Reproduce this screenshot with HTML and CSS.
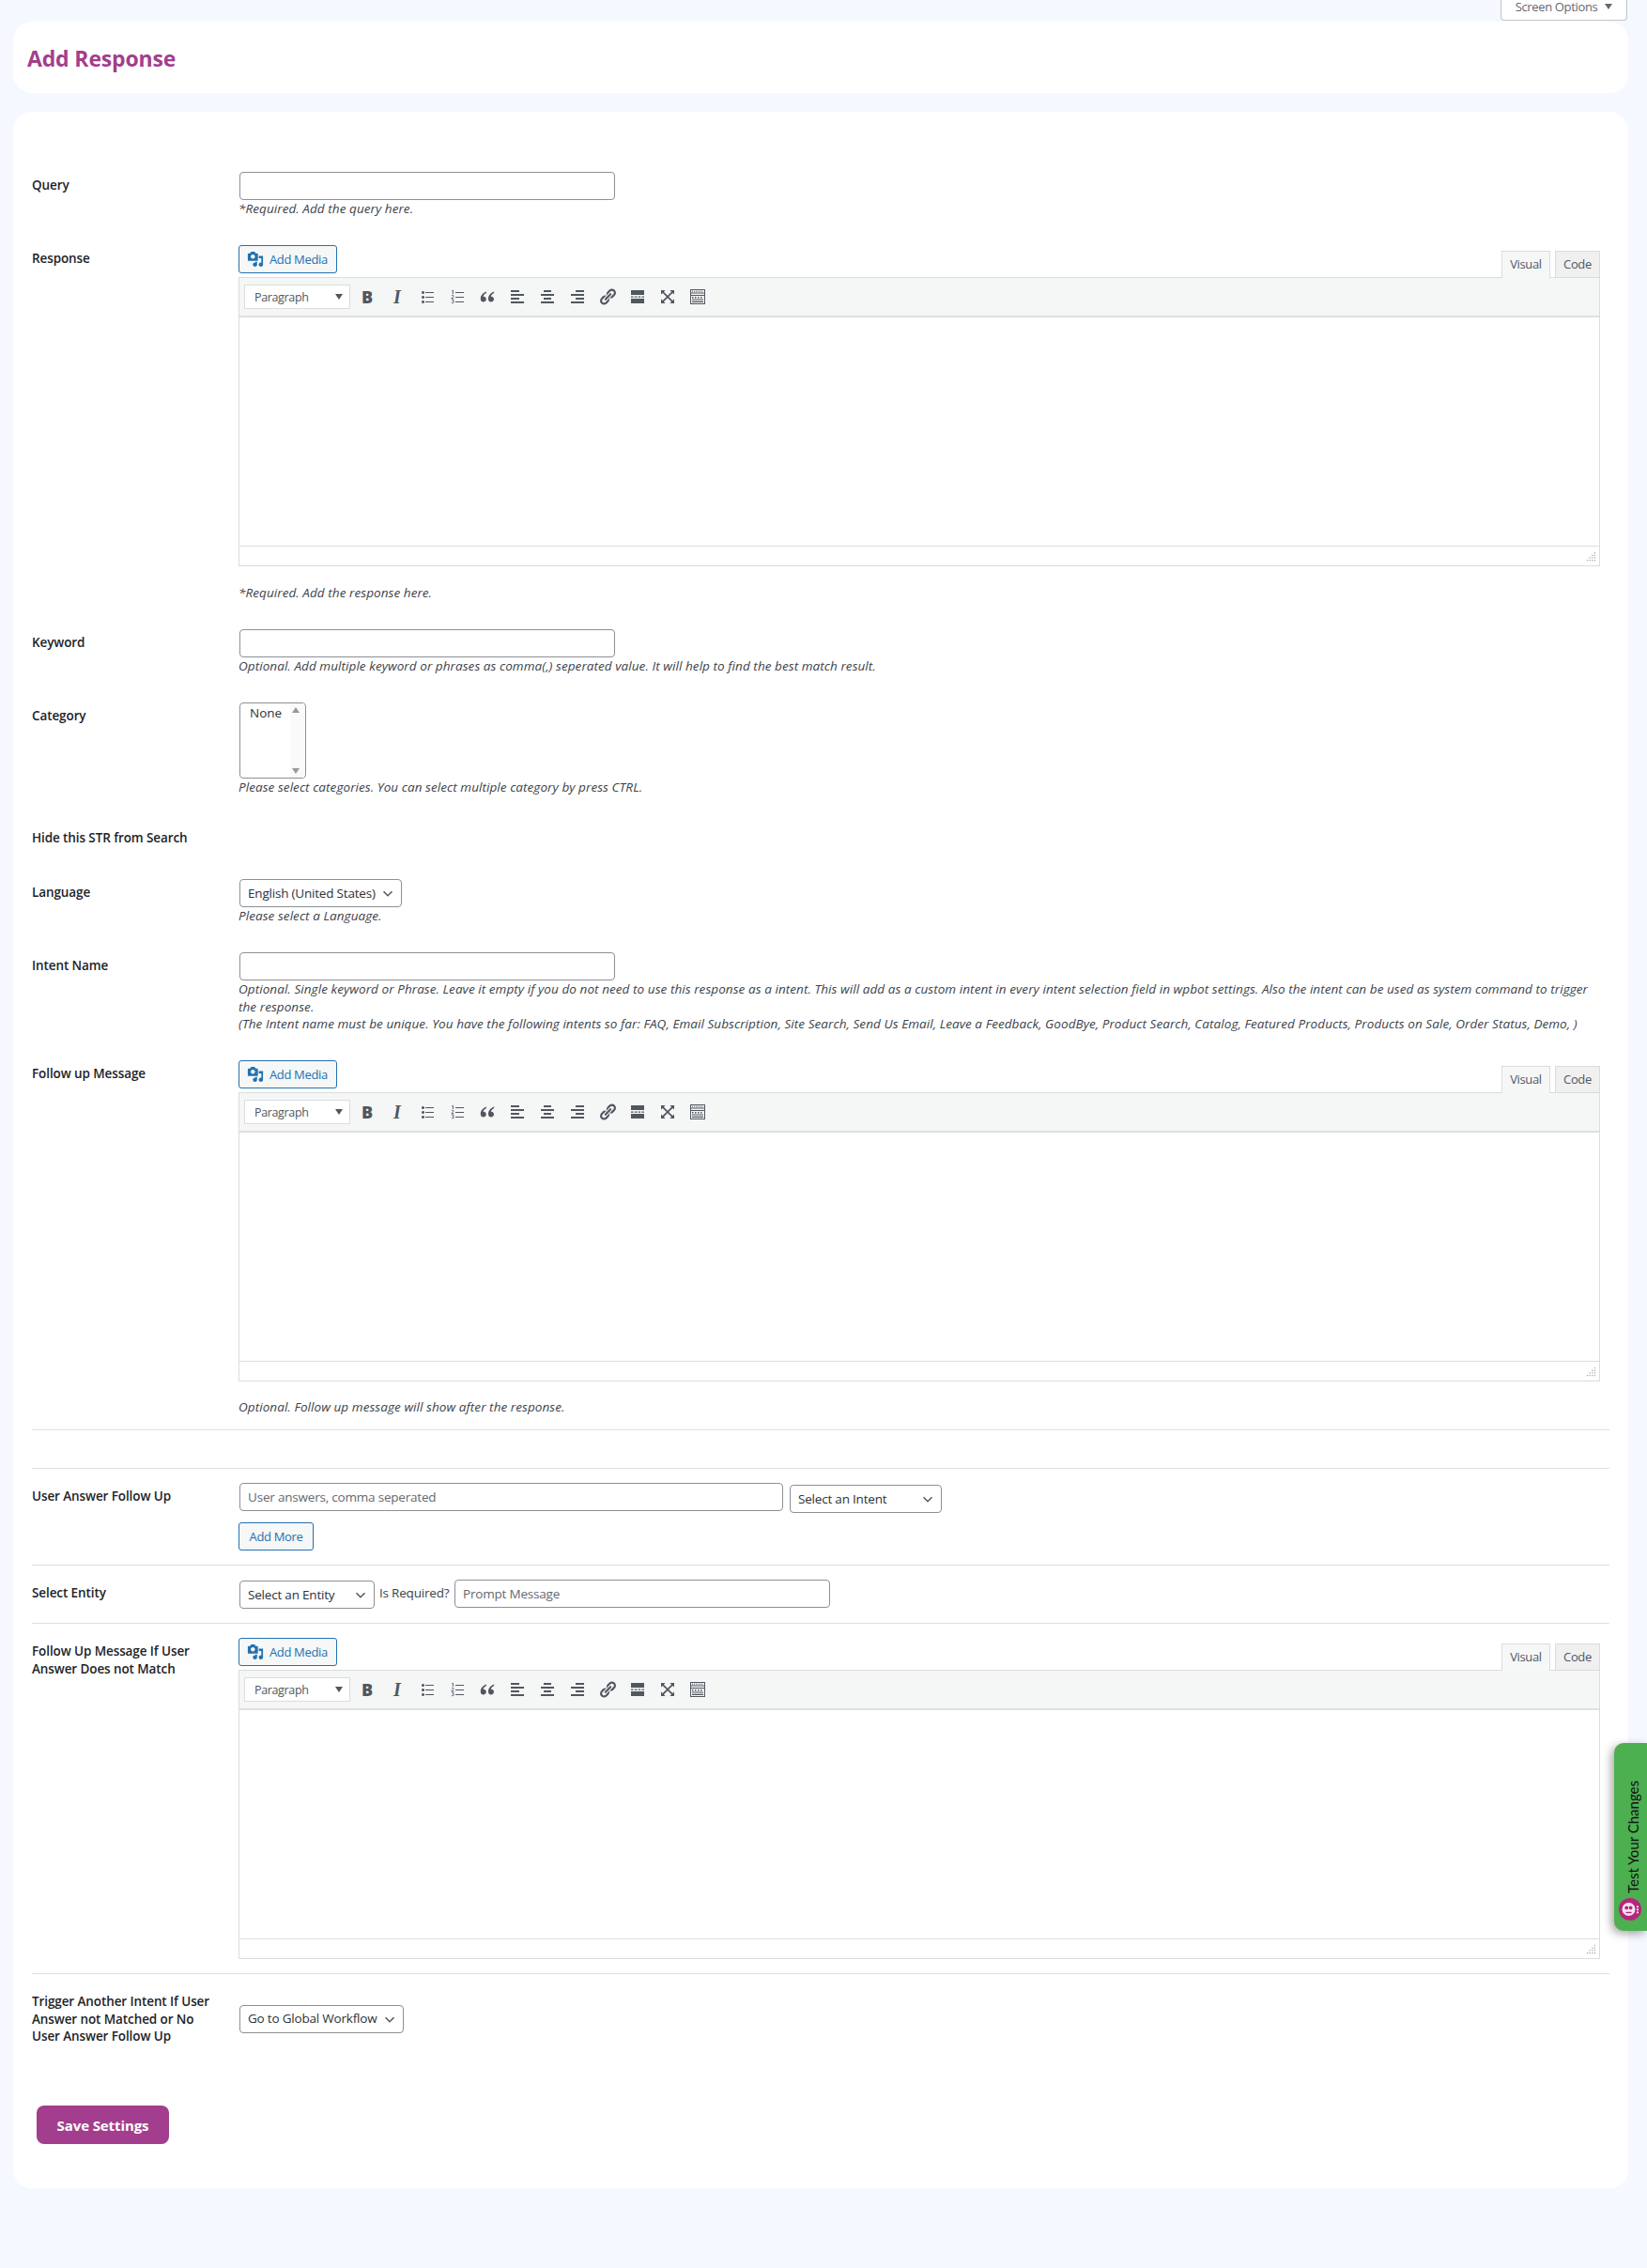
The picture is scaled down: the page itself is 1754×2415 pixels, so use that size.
FILE: index.html
```html
<!DOCTYPE html>
<html lang="en">
<head>
<meta charset="utf-8">
<title>Add Response</title>
<link rel="stylesheet" href="styles.css">
</head>
<body>
<svg class="sprites" aria-hidden="true">
  <symbol id="i-media" viewBox="0 0 20 20"><path d="M13 11V4c0-.55-.45-1-1-1h-1.67L9 1H5L3.67 3H2c-.55 0-1 .45-1 1v7c0 .55.45 1 1 1h10c.55 0 1-.45 1-1zM7 4.5c1.38 0 2.5 1.12 2.5 2.5S8.38 9.5 7 9.5 4.5 8.38 4.5 7 5.62 4.5 7 4.5zM14 6h5v10.5c0 1.38-1.12 2.5-2.5 2.5S14 17.88 14 16.5s1.12-2.5 2.5-2.5c.17 0 .34.02.5.05V9h-3V6zm-4 8.05V13h2v3.5c0 1.38-1.12 2.5-2.5 2.5S7 17.88 7 16.5 8.12 14 9.5 14c.17 0 .34.02.5.05z"/></symbol>
  <symbol id="i-ul" viewBox="0 0 20 20"><path d="M5.5 7C4.67 7 4 6.33 4 5.5 4 4.68 4.67 4 5.5 4 6.32 4 7 4.68 7 5.5 7 6.33 6.32 7 5.5 7zM8 5h9v1H8V5zm-2.5 7c-.83 0-1.5-.67-1.5-1.5C4 9.68 4.67 9 5.5 9c.82 0 1.5.68 1.5 1.5 0 .83-.68 1.5-1.5 1.5zM8 10h9v1H8v-1zm-2.5 7c-.83 0-1.5-.67-1.5-1.5 0-.82.67-1.5 1.5-1.5.82 0 1.5.68 1.5 1.5 0 .83-.68 1.5-1.5 1.5zM8 15h9v1H8v-1z"/></symbol>
  <symbol id="i-ol" viewBox="0 0 20 20"><path d="M8 5h9v1H8V5zm0 5h9v1H8v-1zm0 5h9v1H8v-1z"/><path d="M4.3 3.9 5.4 3.2V7M3.8 8.7c.5-.6 2.2-.6 2.2.5 0 .9-1.4 1.5-2.2 2.6H6.3M3.9 13.4c.6-.5 2.2-.5 2.2.5 0 .5-.5.8-1.1.8.7 0 1.3.4 1.3 1 0 1.1-1.7 1.2-2.5.6" fill="none" stroke="currentColor" stroke-width=".9"/></symbol>
  <symbol id="i-quote" viewBox="0 0 20 20"><path d="M9 4.5C5.4 5.8 2.8 8.4 2.8 12.2c0 2.1 1.3 3.3 3 3.3s3-1.2 3-2.9-1.2-2.8-2.7-2.8c-.2 0-.4 0-.6.1.3-1.5 1.6-2.9 3.5-3.9zm8.2 0c-3.6 1.3-6.2 3.9-6.2 7.7 0 2.1 1.3 3.3 3 3.3s3-1.2 3-2.9-1.2-2.8-2.7-2.8c-.2 0-.4 0-.6.1.3-1.5 1.6-2.9 3.5-3.9z"/></symbol>
  <symbol id="i-left" viewBox="0 0 20 20"><path d="M12 5V3H3v2h9zm5 4V7H3v2h14zm-5 4v-2H3v2h9zm5 4v-2H3v2h14z"/></symbol>
  <symbol id="i-center" viewBox="0 0 20 20"><path d="M14 5V3H6v2h8zm3 4V7H3v2h14zm-3 4v-2H6v2h8zm3 4v-2H3v2h14z"/></symbol>
  <symbol id="i-right" viewBox="0 0 20 20"><path d="M17 5V3H8v2h9zm0 4V7H3v2h14zm0 4v-2H8v2h9zm0 4v-2H3v2h14z"/></symbol>
  <symbol id="i-link" viewBox="0 0 20 20"><path d="M17.74 2.76c1.68 1.69 1.68 4.41 0 6.1l-1.53 1.52c-1.12 1.12-2.7 1.47-4.14 1.09l2.62-2.61.76-.77.76-.76c.84-.84.84-2.2 0-3.04-.84-.85-2.2-.85-3.04 0l-.77.76-3.38 3.38c-.37-1.44-.02-3.02 1.1-4.14l1.52-1.53c1.69-1.68 4.42-1.68 6.1 0zM8.59 13.43l5.34-5.34c.42-.42.42-1.1 0-1.52-.44-.43-1.13-.39-1.53 0l-5.33 5.34c-.42.42-.42 1.1 0 1.52.44.43 1.13.39 1.52 0zm-.76 2.29l4.14-4.15c.38 1.44.03 3.02-1.09 4.14l-1.52 1.53c-1.69 1.68-4.41 1.68-6.1 0-1.68-1.68-1.68-4.42 0-6.1l1.53-1.52c1.12-1.12 2.7-1.47 4.14-1.1l-4.14 4.15c-.85.84-.85 2.2 0 3.05.84.84 2.2.84 3.04 0z"/></symbol>
  <symbol id="i-more" viewBox="0 0 20 20"><path d="M3 3h14v5H3zM3 12h14v5H3zM3 9.5h2.6v1.2H3zM6.8 9.5h2.6v1.2H6.8zM10.6 9.5h2.6v1.2h-2.6zM14.4 9.5H17v1.2h-2.6z"/></symbol>
  <symbol id="i-full" viewBox="0 0 20 20"><path d="M3 3h4.6L5.9 4.7 10 8.8l4.1-4.1L12.4 3H17v4.6l-1.7-1.7L11.2 10l4.1 4.1 1.7-1.7V17h-4.6l1.7-1.7L10 11.2l-4.1 4.1L7.6 17H3v-4.6l1.7 1.7L8.8 10 4.7 5.9 3 7.6z"/></symbol>
  <symbol id="i-sink" viewBox="0 0 20 20"><path d="M2 2h16v16H2zm1 1v2.6h14V3zm0 3.6V17h14V6.6z" fill-rule="evenodd"/><path d="M4 3.8h1v1H4zM6 3.8h1v1H6zM8 3.8h1v1H8zM10 3.8h1v1h-1zM12 3.8h1v1h-1zM14 3.8h1v1h-1zM3 8h14v1H3zM4 10h1.5v1.5H4zM7 10h1.5v1.5H7zM10 10h1.5v1.5H10zM13 10h1.5v1.5H13zM4 12.6h12v1H4zM4 14.8h12v1.2H4z"/></symbol>
  <symbol id="i-grip" viewBox="0 0 10 10"><path d="M8 0h1.2v1.2H8zM5.6 2.4h1.2v1.2H5.6zM8 2.4h1.2v1.2H8zM3.2 4.8h1.2V6H3.2zM5.6 4.8h1.2V6H5.6zM8 4.8h1.2V6H8zM.8 7.2H2v1.2H.8zM3.2 7.2h1.2v1.2H3.2zM5.6 7.2h1.2v1.2H5.6zM8 7.2h1.2v1.2H8z"/></symbol>
</svg>

<div class="topbar"><button class="screen-options" type="button">Screen Options<span class="caret"></span></button></div>

<main class="page">
  <header class="card title-card"><h1>Add Response</h1></header>

  <section class="card form-card">
    <div class="row first">
      <div class="label">Query</div>
      <div class="field">
        <input class="text w400" type="text">
        <p class="hint">*Required. Add the query here.</p>
      </div>
    </div>

    <div class="row">
      <div class="label">Response</div>
      <div class="field">
        <div class="editor-head">
          <button class="media" type="button"><svg class="media-icon"><use href="#i-media"/></svg>Add Media</button>
          <div class="tabs"><span class="tab active">Visual</span><span class="tab">Code</span></div>
        </div>
        <div class="editor">
          <div class="toolbar">
            <span class="format">Paragraph<span class="caret dark"></span></span>
            <span class="tool glyph-b">B</span><span class="tool glyph-i">I</span>
            <span class="tool"><svg><use href="#i-ul"/></svg></span>
            <span class="tool"><svg><use href="#i-ol"/></svg></span>
            <span class="tool"><svg><use href="#i-quote"/></svg></span>
            <span class="tool"><svg><use href="#i-left"/></svg></span>
            <span class="tool"><svg><use href="#i-center"/></svg></span>
            <span class="tool"><svg><use href="#i-right"/></svg></span>
            <span class="tool"><svg><use href="#i-link"/></svg></span>
            <span class="tool"><svg><use href="#i-more"/></svg></span>
            <span class="tool"><svg><use href="#i-full"/></svg></span>
            <span class="tool"><svg><use href="#i-sink"/></svg></span>
          </div>
          <div class="edit-area"></div>
          <div class="status"><svg class="grip"><use href="#i-grip"/></svg></div>
        </div>
        <p class="hint after-editor">*Required. Add the response here.</p>
      </div>
    </div>

    <div class="row">
      <div class="label">Keyword</div>
      <div class="field">
        <input class="text w400" type="text">
        <p class="hint">Optional. Add multiple keyword or phrases as comma(,) seperated value. It will help to find the best match result.</p>
      </div>
    </div>

    <div class="row">
      <div class="label">Category</div>
      <div class="field">
        <div class="listbox"><span class="list-item">None</span><span class="list-scroll"><i class="arrow up"></i><i class="arrow down"></i></span></div>
        <p class="hint">Please select categories. You can select multiple category by press CTRL.</p>
      </div>
    </div>

    <div class="row hide-row">
      <div class="label">Hide this STR from Search</div>
      <div class="field"></div>
    </div>

    <div class="row">
      <div class="label">Language</div>
      <div class="field">
        <select class="pick w-lang"><option>English (United States)</option></select>
        <p class="hint">Please select a Language.</p>
      </div>
    </div>

    <div class="row">
      <div class="label">Intent Name</div>
      <div class="field">
        <input class="text w400" type="text">
        <p class="hint intent-hint">Optional. Single keyword or Phrase. Leave it empty if you do not need to use this response as a intent. This will add as a custom intent in every intent selection field in wpbot settings. Also the intent can be used as system command to trigger the response.<br>(The Intent name must be unique. You have the following intents so far: FAQ, Email Subscription, Site Search, Send Us Email, Leave a Feedback, GoodBye, Product Search, Catalog, Featured Products, Products on Sale, Order Status, Demo, )</p>
      </div>
    </div>

    <div class="row">
      <div class="label">Follow up Message</div>
      <div class="field">
        <div class="editor-head">
          <button class="media" type="button"><svg class="media-icon"><use href="#i-media"/></svg>Add Media</button>
          <div class="tabs"><span class="tab active">Visual</span><span class="tab">Code</span></div>
        </div>
        <div class="editor">
          <div class="toolbar">
            <span class="format">Paragraph<span class="caret dark"></span></span>
            <span class="tool glyph-b">B</span><span class="tool glyph-i">I</span>
            <span class="tool"><svg><use href="#i-ul"/></svg></span>
            <span class="tool"><svg><use href="#i-ol"/></svg></span>
            <span class="tool"><svg><use href="#i-quote"/></svg></span>
            <span class="tool"><svg><use href="#i-left"/></svg></span>
            <span class="tool"><svg><use href="#i-center"/></svg></span>
            <span class="tool"><svg><use href="#i-right"/></svg></span>
            <span class="tool"><svg><use href="#i-link"/></svg></span>
            <span class="tool"><svg><use href="#i-more"/></svg></span>
            <span class="tool"><svg><use href="#i-full"/></svg></span>
            <span class="tool"><svg><use href="#i-sink"/></svg></span>
          </div>
          <div class="edit-area"></div>
          <div class="status"><svg class="grip"><use href="#i-grip"/></svg></div>
        </div>
        <p class="hint after-editor short">Optional. Follow up message will show after the response.</p>
      </div>
    </div>

    <div class="rule-gap"></div>

    <div class="row ruled">
      <div class="label">User Answer Follow Up</div>
      <div class="field">
        <div class="inline">
          <input class="text w-answers" type="text" placeholder="User answers, comma seperated">
          <select class="pick w-intent nudge"><option>Select an Intent</option></select>
        </div>
        <button class="media add-more" type="button">Add More</button>
      </div>
    </div>

    <div class="row ruled">
      <div class="label">Select Entity</div>
      <div class="field">
        <div class="inline entity">
          <select class="pick w-entity"><option>Select an Entity</option></select>
          <span class="required">Is Required?</span>
          <input class="text w400" type="text" placeholder="Prompt Message">
        </div>
      </div>
    </div>

    <div class="row ruled">
      <div class="label">Follow Up Message If User Answer Does not Match</div>
      <div class="field">
        <div class="editor-head">
          <button class="media" type="button"><svg class="media-icon"><use href="#i-media"/></svg>Add Media</button>
          <div class="tabs"><span class="tab active">Visual</span><span class="tab">Code</span></div>
        </div>
        <div class="editor">
          <div class="toolbar">
            <span class="format">Paragraph<span class="caret dark"></span></span>
            <span class="tool glyph-b">B</span><span class="tool glyph-i">I</span>
            <span class="tool"><svg><use href="#i-ul"/></svg></span>
            <span class="tool"><svg><use href="#i-ol"/></svg></span>
            <span class="tool"><svg><use href="#i-quote"/></svg></span>
            <span class="tool"><svg><use href="#i-left"/></svg></span>
            <span class="tool"><svg><use href="#i-center"/></svg></span>
            <span class="tool"><svg><use href="#i-right"/></svg></span>
            <span class="tool"><svg><use href="#i-link"/></svg></span>
            <span class="tool"><svg><use href="#i-more"/></svg></span>
            <span class="tool"><svg><use href="#i-full"/></svg></span>
            <span class="tool"><svg><use href="#i-sink"/></svg></span>
          </div>
          <div class="edit-area"></div>
          <div class="status"><svg class="grip"><use href="#i-grip"/></svg></div>
        </div>
      </div>
    </div>

    <div class="row ruled centered">
      <div class="label">Trigger Another Intent If User Answer not Matched or No User Answer Follow Up</div>
      <div class="field">
        <select class="pick w-global"><option>Go to Global Workflow</option></select>
      </div>
    </div>

    <button class="save" type="button">Save Settings</button>
  </section>
</main>

<aside class="test-tab">
  <span class="test-text">Test Your Changes</span>
  <svg class="bot" viewBox="0 0 24 24" aria-hidden="true">
    <circle cx="12" cy="12" r="12" fill="#b5267e"/>
    <circle cx="10.5" cy="12" r="7" fill="#f7e3ef"/>
    <circle cx="8.2" cy="10.5" r="1.9" fill="#b5267e"/>
    <circle cx="12.6" cy="10.5" r="1.9" fill="#b5267e"/>
    <path d="M7.5 14.8h6v1.4h-6z" fill="#b5267e"/>
    <path d="M19 8.5h1.8v1.8H19zM19 11.5h1.8v1.8H19zM19 14.5h1.8v1.8H19z" fill="#fff"/>
  </svg>
</aside>
</body>
</html>
```
FILE: styles.css
```css
* { box-sizing: border-box; }
html, body { margin: 0; padding: 0; background: #f5f8fe; }
body {
  position: relative;
  font-family: "Open Sans", "Noto Sans", sans-serif;
  font-size: 13.5px;
  line-height: 19px;
  color: #3c434a;
  min-height: 2415px;
  overflow: hidden;
}
.sprites { position: absolute; width: 0; height: 0; }

.topbar { height: 23px; display: flex; justify-content: flex-end; padding-right: 21px; }
.screen-options {
  width: 135px; height: 22px; padding: 0;
  display: flex; justify-content: center; align-items: flex-start;
  font: 13px/14px "Open Sans", sans-serif; letter-spacing: -0.35px; color: #646970;
  background: #fff; border: 1px solid #c3c4c7; border-top: 0; border-radius: 0 0 4px 4px;
}
.caret { display: inline-block; width: 0; height: 0; margin: 4px 0 0 8px; border: 4px solid transparent; border-top: 6px solid #646970; border-bottom: 0; }
.caret.dark { border-top-color: #50575e; margin: 0; }

.page { padding: 0 20px 0 14px; }
.card { background: #fff; border-radius: 20px; }
.title-card { height: 76px; padding: 2px 15px 0; display: flex; align-items: center; margin-bottom: 20px; }
h1 { margin: 0; font-size: 23px; line-height: 28px; font-weight: 700; color: #a23e8d; letter-spacing: -0.15px; }
.form-card { height: 2211px; padding: 64px 20px 0; }

.row { display: grid; grid-template-columns: 220px 1fr; margin-top: 29px; }
.row.first { margin-top: 0; }
.hide-row { min-height: 29px; margin-top: 30px; }
.row.ruled { margin-top: 0; padding: 15px 0; border-top: 1px solid #e0e0e0; }
.row.centered { align-items: center; }
.rule-gap { height: 41px; margin-top: 14px; border-top: 1px solid #e0e0e0; }
.label { padding-top: 5px; font-weight: 600; color: #1d2327; line-height: 18.4px; max-width: 190px; letter-spacing: -0.1px; }
.field { padding-right: 10px; min-width: 0; }
.centered .field { padding-top: 5px; }

.hint { margin: 0; font-style: italic; color: #3c434a; line-height: 19px; letter-spacing: 0.07px; }
.hint.intent-hint { line-height: 18.7px; }
.hint.after-editor { margin-top: 19px; }
.hint.short { margin-top: 18px; }

.text {
  display: block; height: 30px; margin: 0 1px; padding: 0 8px;
  font: inherit; letter-spacing: -0.2px; color: #2c3338;
  background: #fff; border: 1px solid #8c8f94; border-radius: 4px; outline: 0;
}
.text::placeholder { color: #646970; opacity: 1; }
.w400 { width: 400px; }
.w-answers { width: 579px; }

.pick {
  display: block; height: 30px; margin: 0 1px; padding: 0 20px 0 8px;
  font: inherit; letter-spacing: -0.2px; color: #2c3338;
  background: #fff url("data:image/svg+xml,%3Csvg xmlns='http://www.w3.org/2000/svg' width='20' height='20' viewBox='0 0 20 20'%3E%3Cpath d='M5 8l5 5 5-5' fill='none' stroke='%2350575e' stroke-width='1.6'/%3E%3C/svg%3E") no-repeat right 5px center / 18px;
  border: 1px solid #8c8f94; border-radius: 4px;
  appearance: none; -webkit-appearance: none;
}
.w-lang { width: 173px; }
.w-intent { width: 162px; }
.w-entity { width: 144px; }
.w-global { width: 175px; }

.inline { display: flex; align-items: flex-start; }
.nudge { margin: 2px 0 0 6px; }
.entity .pick { margin-top: 1px; }
.required { margin: 5px 0 0 4px; width: 80px; letter-spacing: -0.2px; }
.entity .text { margin: 0; }

.media {
  display: inline-flex; align-items: center; height: 30px; padding: 0 7px 0 8px; width: 105px;
  font: 13px/19px "Open Sans", sans-serif; letter-spacing: -0.35px; color: #2271b1;
  background: #f6f7f7; border: 1px solid #2271b1; border-radius: 3px;
}
.media-icon { width: 18px; height: 18px; margin-right: 6px; fill: #2271b1; }
.add-more { display: flex; justify-content: center; width: 80px; margin-top: 10px; padding: 0; }

.editor-head { display: flex; justify-content: space-between; height: 34px; }
.tabs { display: flex; align-self: flex-end; gap: 5px; }
.tab {
  height: 28px; padding: 4px 0 0; text-align: center; color: #50575e;
  background: #f0f0f1; border: 1px solid #dcdcde; border-bottom: 0; position: relative;
  width: 48px; font-size: 13px; letter-spacing: -0.35px;
}
.tab.active { background: #f6f7f7; width: 52px; height: 29px; margin-bottom: -1px; z-index: 1; }

.editor { border: 1px solid #dcdcde; width: 100%; }
.toolbar { display: flex; align-items: center; height: 42px; padding: 0 5px; background: #f5f6f6; border-bottom: 2px solid #dfdfdf; }
.format {
  display: flex; align-items: center; justify-content: space-between;
  width: 113px; height: 26px; padding: 0 7px 0 10px; margin-right: 4px;
  color: #50575e; background: #fff; border: 1px solid #dcdcde; font-size: 12.5px; letter-spacing: -0.35px;
}
.tool { display: flex; align-items: center; justify-content: center; width: 28px; height: 30px; margin-right: 4px; color: #50575e; }
.tool svg { width: 20px; height: 20px; fill: currentColor; margin-top: -1px; }
.glyph-b { font: 800 18px/20px "Open Sans", sans-serif; }
.glyph-i { font: italic 700 20px/20px "Liberation Serif", serif; }
.edit-area { height: 243px; background: #fff; }
.status { position: relative; height: 21px; background: #fff; border-top: 1px solid #dcdcde; }
.grip { position: absolute; right: 3px; bottom: 3px; width: 11px; height: 11px; fill: #a7aaad; }

.listbox { display: flex; justify-content: space-between; width: 71px; height: 81px; margin: 0 1px; background: #fff; border: 1px solid #8c8f94; border-radius: 4px; }
.list-item { padding: 1px 0 0 10px; color: #2c3338; }
.list-scroll { position: relative; width: 15px; margin-right: 1px; background: #fafafa; }
.arrow { position: absolute; left: 2px; width: 0; height: 0; border: 4.5px solid transparent; }
.arrow.up { top: 4px; border-top: 0; border-bottom: 6px solid #999; }
.arrow.down { bottom: 4px; border-bottom: 0; border-top: 6px solid #999; }

.save {
  display: block; width: 141px; height: 41px; margin: 50px 0 0 5px; padding: 0;
  font: 700 15px/20px "Open Sans", sans-serif; letter-spacing: -0.1px; color: #fff;
  background: #a23e8d; border: 0; border-radius: 8px;
}

.test-tab {
  position: absolute; top: 1856px; right: 0; width: 35px; height: 200px;
  background: #4caf50; border-radius: 10px 0 0 10px;
  box-shadow: -3px 3px 10px rgba(0,0,0,.35);
}
.test-text {
  position: absolute; left: 11px; bottom: 40px;
  writing-mode: vertical-rl; transform: rotate(180deg);
  font-family: "Lato", "Open Sans", sans-serif; font-size: 15px; line-height: 18px; color: #111;
  white-space: nowrap;
}
.bot { position: absolute; left: 5px; top: 165px; width: 24px; height: 24px; }
```
